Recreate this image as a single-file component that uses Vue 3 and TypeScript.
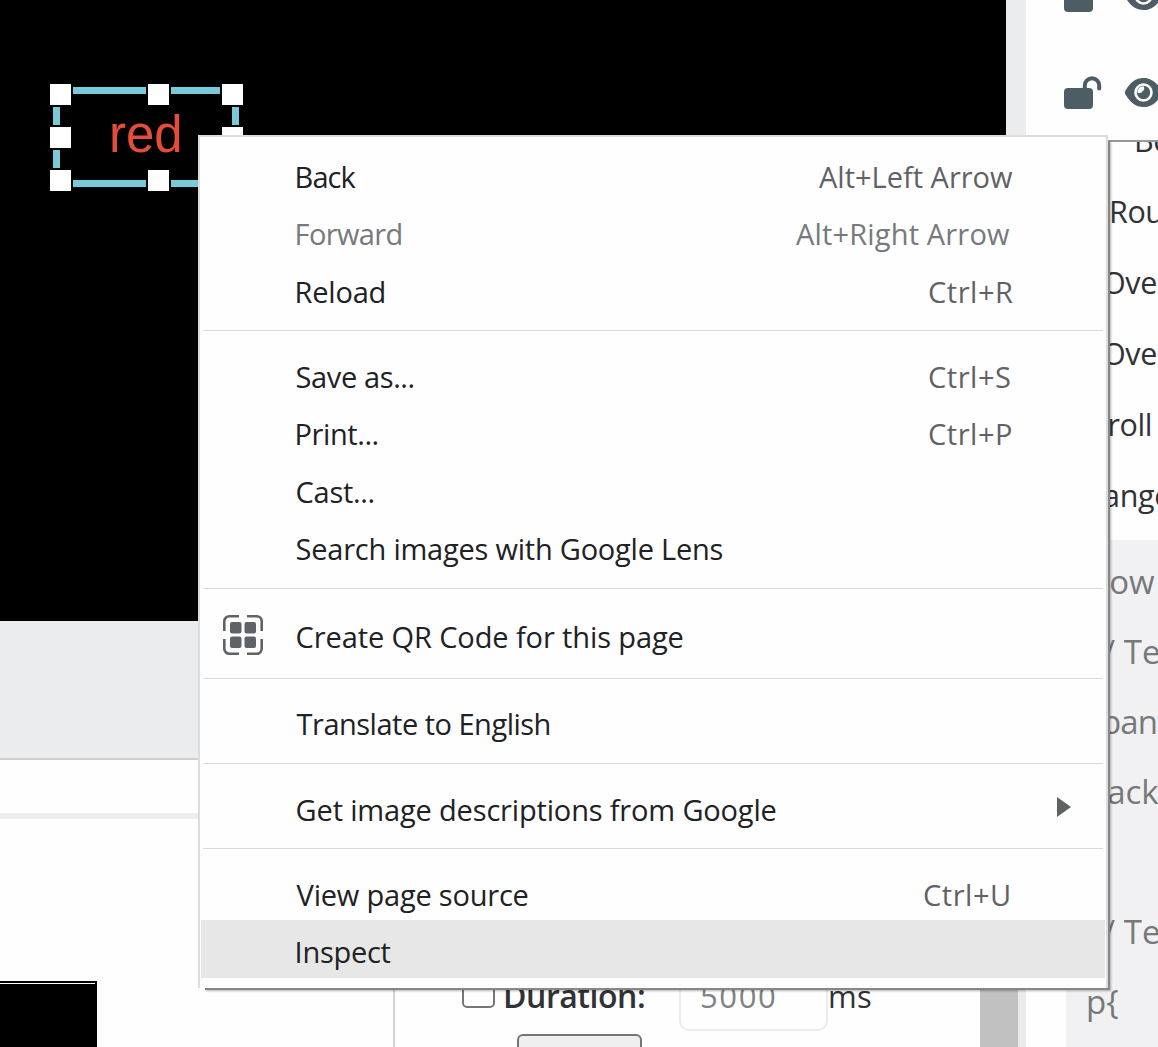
<script setup lang="ts">
import type { Directive } from 'vue'

interface Item {
  label: string
  width: number
  keys?: string
  keysWidth?: number
  keysEnd?: number
  disabled?: boolean
  active?: boolean
  icon?: boolean
  submenu?: boolean
}

const groups: Item[][] = [
  [
    { label: 'Back', width: 60, keys: 'Alt+Left Arrow', keysWidth: 194, keysEnd: 1013 },
    { label: 'Forward', width: 105, keys: 'Alt+Right Arrow', keysWidth: 214, keysEnd: 1010, disabled: true },
    { label: 'Reload', width: 88, keys: 'Ctrl+R', keysWidth: 84, keysEnd: 1013 },
  ],
  [
    { label: 'Save as...', width: 117, keys: 'Ctrl+S', keysWidth: 81, keysEnd: 1010 },
    { label: 'Print...', width: 81, keys: 'Ctrl+P', keysWidth: 82, keysEnd: 1011 },
    { label: 'Cast...', width: 77 },
    { label: 'Search images with Google Lens', width: 426 },
  ],
  [{ label: 'Create QR Code for this page', width: 386, icon: true }],
  [{ label: 'Translate to English', width: 253 }],
  [{ label: 'Get image descriptions from Google', width: 479, submenu: true }],
  [
    { label: 'View page source', width: 231, keys: 'Ctrl+U', keysWidth: 85, keysEnd: 1009 },
    { label: 'Inspect', width: 94, active: true },
  ],
]

const options = [
  { text: 'Bo', x: 1134 },
  { text: 'Rou', x: 1109 },
  { text: 'Ove', x: 1102 },
  { text: 'Ove', x: 1102 },
  { text: 'Scroll', x: 1077 },
  { text: 'Change', x: 1066 },
]

const code = [
  { text: 'how', x: 1089 },
  { text: '// Te', x: 1091 },
  { text: 'span.', x: 1086 },
  { text: 'back', x: 1087 },
  { text: '', x: 1086 },
  { text: '// Te', x: 1091 },
  { text: 'p{', x: 1086 },
]

// Tracks a label so that its glyphs span the given width, from first ink to last.
const vFit: Directive<HTMLElement, number> = {
  mounted(el, { value }) {
    const text = el.textContent ?? ''
    const ctx = document.createElement('canvas').getContext('2d')
    if (!ctx || text.length < 2) return
    const style = getComputedStyle(el)
    ctx.font = `${style.fontWeight} ${style.fontSize} ${style.fontFamily}`
    const m = ctx.measureText(text)
    const ink = m.actualBoundingBoxRight + m.actualBoundingBoxLeft
    const gap = (value - ink) / (text.length - 1)
    el.style.letterSpacing = `${gap}px`
    el.style.width = `${value}px`
    el.style.textIndent = `${m.actualBoundingBoxLeft}px`
  },
}
</script>

<template>
  <div class="app">
    <main class="main">
      <section class="stage">
        <div class="canvas">
          <div class="selection">
            <i class="edge top a" /><i class="edge top b" />
            <i class="edge bottom a" /><i class="edge bottom b" />
            <i class="edge left a" /><i class="edge left b" />
            <i class="edge right a" />
            <i class="handle h1" /><i class="handle h2" /><i class="handle h3" />
            <i class="handle h4" /><i class="handle h5" />
            <i class="handle h6" /><i class="handle h7" />
            <span class="word">red</span>
          </div>
        </div>
      </section>
      <div class="tabs" />
      <section class="lower">
        <div class="frames"><div class="thumb" /></div>
        <div class="settings">
          <div class="duration">
            <span class="check" />
            <b v-fit="138" class="duration-label">Duration:</b>
            <span class="field"><span v-fit="73">5000</span></span>
            <span v-fit="41" class="unit">ms</span>
          </div>
          <div class="button" />
        </div>
        <div class="scroll" />
      </section>
    </main>

    <aside class="side">
      <div class="layers">
        <svg width="132" height="140" viewBox="1026 0 132 140">
          <g v-for="dy in [-97, 0]" :key="dy" :transform="`translate(0 ${dy})`">
            <rect x="1064" y="88" width="29" height="21" rx="4" fill="#4c5e63" />
            <path d="M1084.800 90v-4.500a7.200 7.200 0 0 1 14.400 0v3" fill="none" stroke="#4c5e63" stroke-width="4" stroke-linecap="round" />
            <path d="M1125.500 90.500C1130 82.500 1136 78 1143.500 78s13.500 4.500 18 12.500a4 4 0 0 1 0 4C1157 102.500 1151 107 1143.500 107s-13.500-4.500-18-12.500a4 4 0 0 1 0-4z" fill="#4c5e63" />
            <circle cx="1143.500" cy="92.500" r="8" fill="#4c5e63" stroke="#fff" stroke-width="2.600" />
            <path d="M1143.500 86.300a6.200 6.200 0 0 0-6.200 6.200a3.600 3.600 0 0 0 5.200-1.200a3.600 3.600 0 0 0 1-5z" fill="#fff" />
          </g>
        </svg>
      </div>
      <div class="options">
        <div v-for="(o, i) in options" :key="i" class="option" :style="{ paddingLeft: `${o.x - 1026}px` }">{{ o.text }}</div>
      </div>
      <div class="code">
        <div v-for="(line, i) in code" :key="i" class="line" :style="{ paddingLeft: `${line.x - 1066}px` }">{{ line.text }}</div>
      </div>
    </aside>

    <nav class="menu">
      <div v-for="(group, g) in groups" :key="g" class="group">
        <div
          v-for="item in group"
          :key="item.label"
          class="item"
          :class="{ disabled: item.disabled, active: item.active, tall: item.icon }"
        >
          <span class="gutter">
            <svg v-if="item.icon" width="42" height="42" viewBox="0 0 42 42">
              <g fill="none" stroke="#5f6368" stroke-width="2.600">
                <path d="M2.300 17V7.300a5 5 0 0 1 5-5H17M25 2.300h9.700a5 5 0 0 1 5 5V17M39.700 25v9.700a5 5 0 0 1-5 5H25M17 39.700H7.300a5 5 0 0 1-5-5V25" />
              </g>
              <g fill="#5f6368">
                <rect x="8" y="8" width="11.500" height="11.500" rx="2" />
                <rect x="22.500" y="8" width="11.500" height="11.500" rx="2" />
                <rect x="8" y="22.500" width="11.500" height="11.500" rx="2" />
                <rect x="22.500" y="22.500" width="11.500" height="11.500" rx="2" />
              </g>
            </svg>
          </span>
          <span v-fit="item.width" class="label">{{ item.label }}</span>
          <span
            v-if="item.keys"
            v-fit="item.keysWidth ?? 0"
            class="keys"
            :style="{ marginRight: `${1106 - (item.keysEnd ?? 0)}px` }"
          >{{ item.keys }}</span>
          <svg v-if="item.submenu" class="arrow" width="14" height="20" viewBox="0 0 14 20"><path d="M0 0l14 10L0 20z" fill="#5f6163" /></svg>
        </div>
      </div>
    </nav>
  </div>
</template>

<style>
body { margin: 0; overflow: hidden; }
</style>

<style scoped>
* { box-sizing: border-box; }
.app {
  position: relative;
  display: flex;
  width: 1158px;
  height: 1047px;
  overflow: hidden;
  background: #fefefe;
  color: #303236;
  font-family: "Open Sans", "Noto Sans", sans-serif;
  white-space: nowrap;
}
.main { width: 1026px; display: flex; flex-direction: column; }
.stage { flex: none; height: 760px; background: #ebecee; border-bottom: 2px solid #cfcfd0; }
.canvas { width: 1006px; height: 621px; background: #000; padding: 84px 0 0 50px; }
.selection { position: relative; width: 193px; height: 107px; }
.edge { position: absolute; background: #78cad8; }
.top { top: 3px; height: 7px; }
.bottom { top: 96px; height: 7px; }
.top.a, .bottom.a { left: 23px; width: 73px; }
.top.b, .bottom.b { left: 121px; width: 49px; }
.left { left: 3px; width: 7px; height: 18px; }
.left.a, .right.a { top: 23px; }
.left.b { top: 66px; }
.right { left: 182px; width: 7px; height: 18px; }
.handle { position: absolute; width: 21px; height: 21px; background: #fff; }
.h1 { left: 0; top: 0; }
.h2 { left: 98px; top: 0; }
.h3 { left: 172px; top: 0; }
.h4 { left: 0; top: 43px; }
.h5 { left: 172px; top: 43px; }
.h6 { left: 0; top: 86px; }
.h7 { left: 98px; top: 86px; }
.word {
  position: absolute;
  left: 59px;
  top: 22px;
  color: #e64c3c;
  font: 51px/58px "Liberation Sans", Arial, sans-serif;
}
.tabs { flex: none; height: 59px; border-bottom: 6px solid #ebeeef; }
.lower { height: 228px; display: flex; overflow: hidden; }
.frames { width: 395px; padding-top: 162px; border-right: 2px solid #d2d3d4; }
.thumb { width: 97px; height: 70px; background: #000; border-top: 2px solid #000; }
.thumb::before { content: ""; display: block; width: 95px; height: 1px; background: #fff; }
.settings { width: 585px; padding: 145px 0 0 67px; }
.duration { display: flex; height: 67px; }
.check { width: 33px; height: 32px; margin-top: 12px; border: 2px solid #747678; border-radius: 5px; }
.duration-label { margin: 10px 0 0 11px; font-size: 32px; line-height: 44px; font-weight: 600; }
.field { width: 149px; height: 67px; margin-left: 35px; padding: 10px 0 0 21px; border: 2px solid #ebebec; border-radius: 10px; color: #808183; font-size: 31px; line-height: 40px; }
.field > span { display: block; }
.unit { margin: 10px 0 0 2px; font-size: 31px; line-height: 44px; }
.button { width: 125px; height: 40px; margin: 3px 0 0 55px; border: 2px solid #747577; border-radius: 6px; background: #efeff0; }
.scroll { width: 46px; background: #c1c1c1; border-right: 8px solid #ebebec; }

.side { width: 132px; display: flex; flex-direction: column; overflow: hidden; }
.layers { flex: none; height: 142px; border-bottom: 2px solid #999; }
.layers svg { display: block; }
.options { flex: none; height: 398px; overflow: hidden; }
.option { height: 71.2px; font-size: 30.5px; line-height: 70px; font-weight: 500; letter-spacing: -0.4px; }
.option:first-child { margin-top: -37.5px; }
.code { flex: 1; margin-left: 40px; padding-top: 7px; background: #f1f1f3; color: #777879; }
.line { height: 70px; font-size: 33px; line-height: 70px; }
.line:nth-child(3) { letter-spacing: -0.8px; }

.menu {
  position: absolute;
  left: 198px;
  top: 135px;
  width: 910px;
  height: 853px;
  padding-top: 7.7px;
  background: #fefefe;
  border: 2px solid #dcdddf;
  border-bottom: 0;
}
.menu::before {
  content: "";
  position: absolute;
  left: 5px;
  right: -4px;
  top: 4px;
  bottom: -2px;
  border-right: 2px solid #858688;
  border-bottom: 2px solid #858688;
  box-shadow: 1px 1px 2px rgba(0, 0, 0, 0.3);
  clip-path: polygon(calc(100% - 2px) 0, calc(100% + 3px) 0, calc(100% + 3px) calc(100% + 3px), 0 calc(100% + 3px), 0 calc(100% - 2px), calc(100% - 2px) calc(100% - 2px));
}
.group + .group { margin-top: 13.3px; padding-top: 13.3px; position: relative; }
.group + .group::before { content: ""; display: block; height: 1px; margin: -13.3px 3px 13.3px; background: #d9dadc; }
.item { display: flex; align-items: center; height: 57.5px; color: #202124; font-size: 29px; line-height: 40px; }
.item.tall { height: 62.4px; }
.item.active { margin: 0 1px; padding-right: 1px; background: #e7e7e7; }
.item.active .gutter { width: 95px; }
.gutter { width: 96px; padding: 2px 0 0 22px; display: flex; }
.label, .keys { display: block; padding-top: 6.6px; }
.label { margin-left: 0.6px; }
.keys { margin-left: auto; color: #606266; }
.disabled .label, .disabled .keys { color: #76797d; }
.arrow { margin: 1px 35px 0 auto; }
</style>
